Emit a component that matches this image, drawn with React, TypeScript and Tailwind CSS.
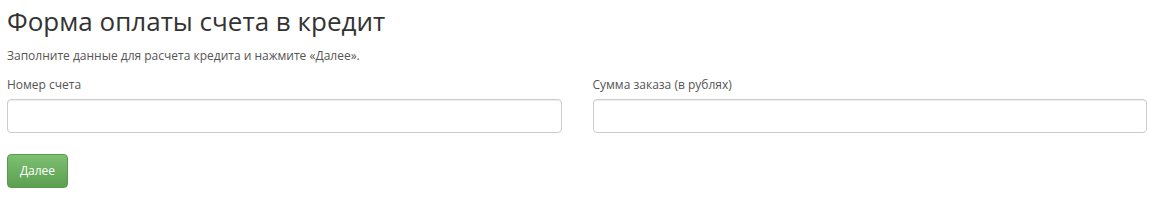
import React from 'react';

const fieldClass =
  'h-[34px] w-full rounded-[4px] border border-[#cccccc] bg-white px-3 text-[13px] text-[#555] shadow-[inset_0_1px_1px_rgba(0,0,0,0.075)] outline-none';

export default function App() {
  return (
    <div className="min-h-[206px] bg-white pl-[7px] pr-[14px] pt-[3px] font-['Open_Sans',sans-serif] text-[#555]">
      <h1 className="text-[26px] leading-[36px] text-[#333]">Форма оплаты счета в кредит</h1>
      <p className="mt-[9px] text-[12px] leading-[16px] text-[#555]">
        Заполните данные для расчета кредита и нажмите «Далее».
      </p>

      <div className="mt-[13px] flex gap-[31px]">
        <label className="flex flex-1 flex-col">
          <span className="text-[12px] leading-[16px] text-[#555]">Номер счета</span>
          <input className={`mt-[6px] ${fieldClass}`} type="text" />
        </label>
        <label className="flex flex-1 flex-col">
          <span className="text-[12px] leading-[16px] text-[#555]">Сумма заказа (в рублях)</span>
          <input className={`mt-[6px] ${fieldClass}`} type="text" />
        </label>
      </div>

      <button
        type="button"
        className="mt-[21px] h-[34px] w-[61px] rounded-[4px] border border-[#5a9a4e] bg-gradient-to-b from-[#7dc071] to-[#5c9f51] text-[12px] text-white"
      >
        Далее
      </button>
    </div>
  );
}
